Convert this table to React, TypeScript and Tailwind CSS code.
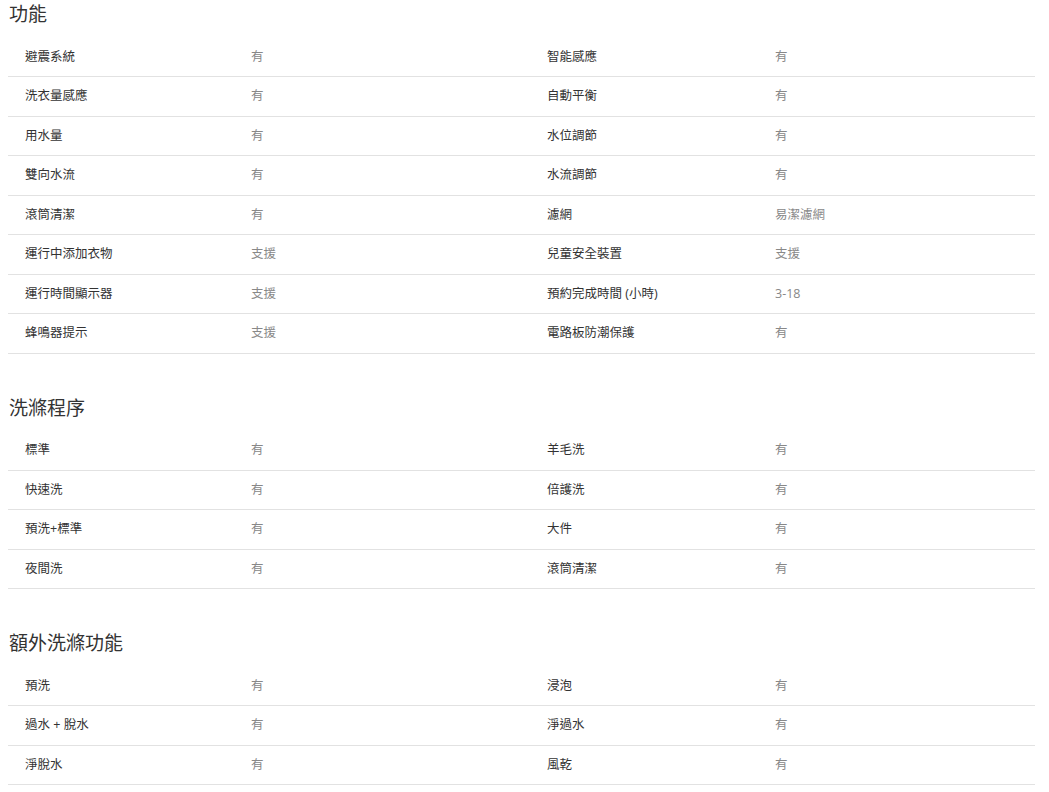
const sections: { title: string; rows: [string, string, string, string][] }[] = [
  {
    title: '功能',
    rows: [
      ['避震系統', '有', '智能感應', '有'],
      ['洗衣量感應', '有', '自動平衡', '有'],
      ['用水量', '有', '水位調節', '有'],
      ['雙向水流', '有', '水流調節', '有'],
      ['滾筒清潔', '有', '濾網', '易潔濾網'],
      ['運行中添加衣物', '支援', '兒童安全裝置', '支援'],
      ['運行時間顯示器', '支援', '預約完成時間 (小時)', '3-18'],
      ['蜂鳴器提示', '支援', '電路板防潮保護', '有'],
    ],
  },
  {
    title: '洗滌程序',
    rows: [
      ['標準', '有', '羊毛洗', '有'],
      ['快速洗', '有', '倍護洗', '有'],
      ['預洗+標準', '有', '大件', '有'],
      ['夜間洗', '有', '滾筒清潔', '有'],
    ],
  },
  {
    title: '額外洗滌功能',
    rows: [
      ['預洗', '有', '浸泡', '有'],
      ['過水 + 脫水', '有', '淨過水', '有'],
      ['淨脫水', '有', '風乾', '有'],
    ],
  },
];

export default function App() {
  return (
    <div
      className="bg-white w-[1049px] min-h-[792px]"
      style={{ fontFamily: '"Open Sans", "Noto Sans CJK TC", sans-serif' }}
    >
      {sections.map((s, i) => (
        <section key={s.title} className={i === 0 ? '' : 'mt-[40px]'}>
          <h2 className="h-[28px] leading-[28px] pl-[9px] text-[19px] text-[#333]">{s.title}</h2>
          <div className="mt-[9.5px] ml-2 w-[1027px]">
            {s.rows.map((r) => (
              <div
                key={r[0]}
                className="grid grid-cols-[226px_296px_228px_1fr] items-center h-[39.5px] pl-[17px] pt-px border-b border-[#e2e2e2] text-[12.5px]"
              >
                <span className="text-[#333]">{r[0]}</span>
                <span className="text-[#888]">{r[1]}</span>
                <span className="text-[#333]">{r[2]}</span>
                <span className="text-[#888]">{r[3]}</span>
              </div>
            ))}
          </div>
        </section>
      ))}
    </div>
  );
}
